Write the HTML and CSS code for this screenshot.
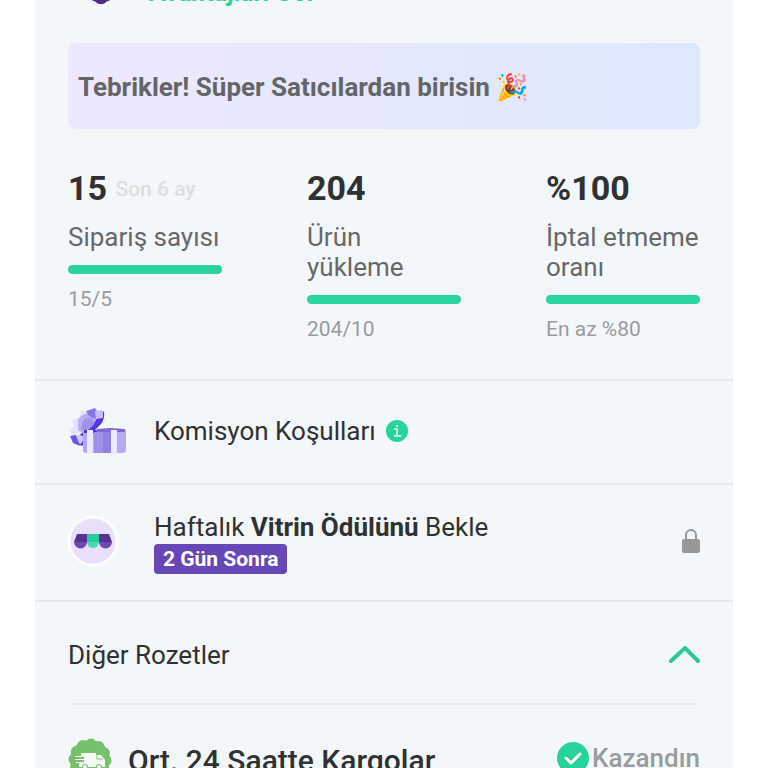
FILE: index.html
```html
<!DOCTYPE html>
<html lang="tr">
<head>
    <meta charset="UTF-8">
    <meta name="viewport" content="width=device-width, initial-scale=1.0">
    <title>Süper Satıcı</title>
    <link rel="stylesheet" href="styles.css">
</head>
<body>
    <main class="card">
        <div class="card-header">
            <svg class="header-icon" viewBox="0 0 30 30" aria-hidden="true">
                <path d="M3 4h24v14c0 3-2 4-5 5l-2 1c-2 3-8 3-10 0l-2-1c-3-1-5-2-5-5z" fill="#4b2e83"/>
            </svg>
            <a class="header-link" href="#">Avantajları Gör</a>
        </div>

        <p class="banner">Tebrikler! Süper Satıcılardan birisin 🎉</p>

        <section class="stats">
            <div class="stat">
                <div class="stat-value">15 <span class="stat-period">Son 6 ay</span></div>
                <div class="stat-label">Sipariş sayısı</div>
                <div class="bar"><div class="bar-fill" style="width: 100%"></div></div>
                <div class="stat-target">15/5</div>
            </div>
            <div class="stat">
                <div class="stat-value">204</div>
                <div class="stat-label">Ürün yükleme</div>
                <div class="bar"><div class="bar-fill" style="width: 100%"></div></div>
                <div class="stat-target">204/10</div>
            </div>
            <div class="stat">
                <div class="stat-value">%100</div>
                <div class="stat-label">İptal etmeme oranı</div>
                <div class="bar"><div class="bar-fill" style="width: 100%"></div></div>
                <div class="stat-target">En az %80</div>
            </div>
        </section>

        <section class="row commission">
            <svg class="gift-icon" viewBox="0 0 60 50" aria-hidden="true">
                <path d="M4 14l8-3 1-7 8 2 7-4 4 6-3 9-9 11-9-2-6 5-3-7 4-4z" fill="#e4e2f8"/>
                <path d="M10 14q6-9 13-6l8 5-13 16-8-5z" fill="#b9aff0"/>
                <path d="M15 15q5-6 9-2l3 4-10 9-4-4z" fill="#a092e8"/>
                <path d="M18 5l9-3 3 5 5-1-8 7-6-3z" fill="#8578e6"/>
                <path d="M36 5q1 8-3 13L21 30l-7 10-6-3q1-8 8-11 9-4 12-12z" fill="#5434e4"/>
                <path d="M10 28l7 3-4 7-6-2z" fill="#cfc8fa"/>
                <path d="M2 30l6-1 4 11-7-3z" fill="#6b57df"/>
                <path d="M27 5l8-1v8l-7 1z" fill="#c5bcf7"/>
                <path d="M15 24h43v20q0 3-3 3H17l-2-2z" fill="#b5a7fa"/>
                <path d="M16 24h15l-3 3H16z" fill="#5531dc"/>
                <path d="M29 23l13-1 15 1v3H28z" fill="#8068db"/>
                <path d="M26 26h18v21H26z" fill="#9f90ee"/>
                <path d="M35 26h8v21h-8z" fill="#9080e3"/>
                <path d="M19 24h6v24h-6zM43 24h6v24h-6z" fill="#edeafd"/>
            </svg>
            <span class="row-text">Komisyon Koşulları</span>
            <button class="info" type="button" aria-label="Bilgi">
                <svg viewBox="0 0 22 22" aria-hidden="true">
                    <circle cx="11" cy="11" r="11" fill="#26d39b"/>
                    <path d="M10 5h2v2h-2z" fill="#dffaf0"/>
                    <path d="M8 9h3v6M8 16h7" fill="none" stroke="#dffaf0" stroke-width="1.5"/>
                </svg>
            </button>
        </section>

        <section class="row reward">
            <svg class="shop-icon" viewBox="0 0 50 50" aria-hidden="true">
                <circle cx="25" cy="25" r="24" fill="#e8dffb" stroke="#fcfcff" stroke-width="3"/>
                <path d="M9 18h10v8H6z" fill="#563296"/>
                <path d="M19 18h12v8H19z" fill="#28ca9b"/>
                <path d="M31 18h10l3 8H31z" fill="#563296"/>
                <path d="M6 26h13a6 6 0 0 1-13 0zM31 26h13a6 6 0 0 1-13 0z" fill="#6b47ae"/>
                <path d="M19 26h12a6 6 0 0 1-12 0z" fill="#4ad9ae"/>
            </svg>
            <div class="reward-text">
                <div>Haftalık <b>Vitrin Ödülünü</b> Bekle</div>
                <span class="tag">2 Gün Sonra</span>
            </div>
            <svg class="lock-icon" viewBox="0 0 18 26" aria-hidden="true">
                <path d="M4 13V7a5 5 0 0 1 10 0v6" fill="none" stroke="#989898" stroke-width="2"/>
                <rect y="11" width="18" height="14" rx="2" fill="#989898"/>
            </svg>
        </section>

        <section class="badges">
            <button class="badges-toggle" type="button" aria-expanded="true">
                Diğer Rozetler
                <svg class="chevron" viewBox="0 0 32 20" aria-hidden="true">
                    <path d="M3 16L17 3l13 13" fill="none" stroke="#2cc995" stroke-width="4" stroke-linecap="round" stroke-linejoin="round"/>
                </svg>
            </button>
            <div class="badge-row">
                <svg class="badge-icon" viewBox="0 0 44 44" aria-hidden="true">
                    <circle cx="22" cy="22" r="20" fill="#78bf6e"/>
                    <circle cx="22" cy="22" r="17" fill="none" stroke="#78bf6e" stroke-width="9" stroke-linecap="round" stroke-dasharray="1 7.9"/>
                    <path d="M13 15h15v2h5l4 5v7h-3a3 3 0 0 0-6 0h-8a3 3 0 0 0-6 0h-3v-4H8v-1h8v-2H7v-1h9v-2H7v-1h6z" fill="#f8fcf8"/>
                    <path d="M29 17v4h6" fill="none" stroke="#78bf6e"/>
                    <circle cx="17" cy="29" r="2" fill="#f8fcf8"/>
                    <circle cx="31" cy="29" r="2" fill="#f8fcf8"/>
                </svg>
                <span class="badge-name">Ort. 24 Saatte Kargolar</span>
                <span class="badge-status">
                    <svg class="check-icon" viewBox="0 0 32 32" aria-hidden="true">
                        <circle cx="16" cy="16" r="16" fill="#26d39b"/>
                        <path d="M9 16l5 5 9-9" fill="none" stroke="#fff" stroke-width="3" stroke-linecap="round" stroke-linejoin="round"/>
                    </svg>
                    Kazandın
                </span>
            </div>
        </section>
    </main>
</body>
</html>
```
FILE: styles.css
```css
* {
    box-sizing: border-box;
}
body {
    margin: 0;
    height: 100vh;
    overflow: hidden;
    background-color: #fff;
    font-family: Roboto, "Liberation Sans", sans-serif;
    font-size: 26px;
    line-height: 30px;
    color: #303133;
}
.card {
    margin: 0 35px;
    background-color: #f4f7f9;
}
.card-header {
    display: flex;
    align-items: center;
    gap: 33px;
    margin: -22px 17px 0;
    padding: 0 33px 35px 34px;
}
.header-icon {
    width: 30px;
    height: 30px;
}
.header-link {
    color: #2cd39e;
    font-size: 25px;
    font-weight: bold;
    text-decoration: none;
}
.banner {
    margin: 0 33px;
    padding: 29px 10px 27px;
    border-radius: 8px;
    background: linear-gradient(to right, #ede8fd, #dde8fc);
    color: #646569;
    font-weight: bold;
}
.stats {
    display: grid;
    grid-template-columns: repeat(3, 1fr);
    gap: 85px;
    padding: 39px 33px 35px;
}
.stat-value {
    margin-bottom: 14px;
    font-size: 34px;
    font-weight: bold;
    line-height: 40px;
    white-space: nowrap;
}
.stat-period {
    color: #dcdee0;
    font-size: 21px;
    font-weight: 500;
    line-height: 20px;
    vertical-align: 4px;
}
.stat-label {
    color: #67686a;
}
.bar {
    height: 9px;
    margin: 13px 0 10px;
    border-radius: 5px;
    background-color: #e3e5e8;
}
.bar-fill {
    height: 100%;
    border-radius: 5px;
    background-color: #2ad3a0;
}
.stat-target {
    color: #9a9b9d;
    font-size: 21px;
}
.row {
    display: flex;
    align-items: center;
    padding: 0 33px;
    border-top: 2px solid #e7e9eb;
}
.commission {
    height: 104px;
    padding-bottom: 2px;
}
.gift-icon {
    width: 60px;
    height: 50px;
    margin-right: 26px;
}
.info {
    width: 22px;
    height: 22px;
    margin-left: 10px;
    padding: 0;
    border: none;
    background: none;
    cursor: pointer;
}
.info svg {
    display: block;
}
.reward {
    height: 117px;
    padding-bottom: 4px;
}
.shop-icon {
    width: 50px;
    height: 50px;
    margin-right: 36px;
    overflow: visible;
}
.reward-text {
    padding-top: 4px;
}
.tag {
    display: block;
    width: fit-content;
    margin-top: 2px;
    padding: 1px 9px 0;
    border-radius: 4px;
    background-color: #6747b5;
    color: #fff;
    font-size: 21px;
    font-weight: bold;
    line-height: 29px;
}
.lock-icon {
    width: 18px;
    height: 26px;
    margin-left: auto;
}
.badges {
    padding: 0 33px 24px;
    border-top: 2px solid #e7e9eb;
}
.badges-toggle {
    display: flex;
    justify-content: space-between;
    align-items: center;
    width: 100%;
    height: 101px;
    padding: 4px 0 0;
    border: none;
    background: none;
    color: inherit;
    font: inherit;
    cursor: pointer;
}
.chevron {
    width: 32px;
    height: 20px;
}
.badge-row {
    display: flex;
    align-items: center;
    padding-top: 35px;
    background: linear-gradient(#e9ebed, #e9ebed) center top / calc(100% - 8px) 2px no-repeat;
}
.badge-icon {
    width: 44px;
    height: 44px;
}
.badge-name {
    margin-left: 16px;
    padding-top: 2px;
    font-size: 30px;
    font-weight: 500;
}
.badge-status {
    display: flex;
    align-items: center;
    gap: 3px;
    margin-left: auto;
    padding-bottom: 4px;
    color: #9a9b9d;
    font-weight: 500;
}
.check-icon {
    width: 32px;
    height: 32px;
}
```
